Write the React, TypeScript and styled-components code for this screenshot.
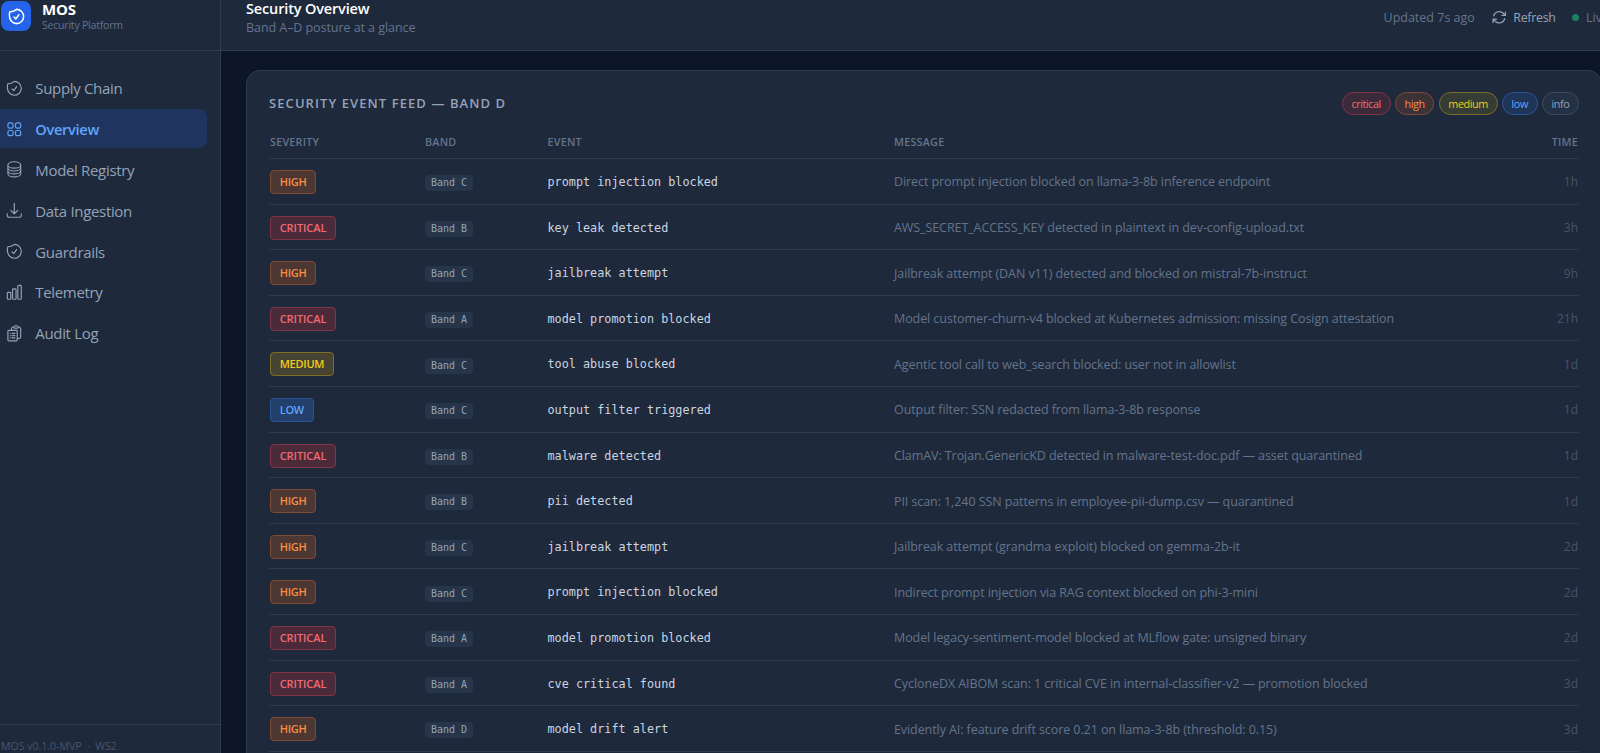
import React from "react";
import styled, { createGlobalStyle } from "styled-components";
import {
  HiOutlineSquares2X2,
  HiOutlineCircleStack,
  HiOutlineArrowDownTray,
  HiOutlineChartBar,
  HiOutlineClipboardDocumentList,
  HiOutlineArrowPath,
} from "react-icons/hi2";

const sans = `"Open Sans", "Noto Sans", sans-serif`;
const mono = `"DejaVu Sans Mono", monospace`;

const c = {
  page: "#0d1628",
  panel: "#1e293b",
  line: "#2e3c50",
  muted: "#64748b",
  soft: "#94a3b8",
  faint: "#475569",
};

type Level = "critical" | "high" | "medium" | "low" | "info";

const tones: Record<Level, { fg: string; bg: string; pill: string; edge: string }> = {
  critical: { fg: "#f06a74", bg: "#4b2b3a", pill: "#3b2a3a", edge: "#7f3644" },
  high: { fg: "#f98d42", bg: "#4c3733", pill: "#3c3137", edge: "#804a34" },
  medium: { fg: "#f2cc1d", bg: "#474332", pill: "#353b35", edge: "#7d7026" },
  low: { fg: "#60a5fa", bg: "#233f6b", pill: "#203658", edge: "#2b5596" },
  info: { fg: "#94a3b8", bg: "#283547", pill: "#243043", edge: "#3f4c60" },
};

const GlobalStyle = createGlobalStyle`
  * { box-sizing: border-box; }
  body { margin: 0; background: ${c.page}; overflow: hidden; }
`;

const Shell = styled.div`
  display: grid;
  grid-template-columns: 221px 1406px;
  height: 753px;
  overflow: hidden;
  background: ${c.page};
  font-family: ${sans};
  color: ${c.soft};
`;

const Sidebar = styled.aside`
  display: flex;
  flex-direction: column;
  height: 753px;
  background: ${c.panel};
  border-right: 1px solid ${c.line};
`;

const Brand = styled.div`
  display: flex;
  gap: 11px;
  flex: none;
  height: 51px;
  padding-left: 1px;
  border-bottom: 1px solid ${c.line};
`;

const Logo = styled.div`
  display: grid;
  place-items: center;
  width: 30px;
  height: 30px;
  margin-top: 1px;
  border-radius: 8px;
  background: #2563eb;
  color: #fff;
  font-size: 19px;

  svg {
    stroke-width: 1.9;
  }
`;

const BrandName = styled.div`
  font-size: 15px;
  line-height: 19px;
  font-weight: 700;
  letter-spacing: -0.15px;
  color: #fff;
`;

const BrandSub = styled.div`
  font-size: 10.5px;
  line-height: 12px;
  letter-spacing: -0.2px;
  color: ${c.muted};
`;

const Nav = styled.nav`
  display: flex;
  flex: 1;
  flex-direction: column;
  gap: 1.9px;
  padding: 17.5px 13px 0 0;
`;

const NavItem = styled.a<{ $active?: boolean }>`
  display: flex;
  align-items: center;
  gap: 12px;
  height: 39px;
  padding-left: 4.7px;
  border-radius: 0 8px 8px 0;
  font-size: ${(p) => (p.$active ? "14.6px" : "15px")};
  font-weight: ${(p) => (p.$active ? 600 : 400)};
  letter-spacing: ${(p) => (p.$active ? "-0.3px" : "-0.33px")};
  color: ${(p) => (p.$active ? "#60a5fa" : c.soft)};
  background: ${(p) => (p.$active ? "#1f355f" : "transparent")};

  svg {
    flex: none;
    font-size: 18.6px;
    stroke-width: 1.5;
  }
`;

const Version = styled.div`
  flex: none;
  height: 29px;
  padding-left: 1px;
  border-top: 1px solid ${c.line};
  font-size: 10.6px;
  line-height: 42px;
  letter-spacing: -0.03px;
  white-space: pre;
  color: ${c.faint};
`;

const Main = styled.main`
  display: flex;
  flex-direction: column;
  min-width: 0;
`;

const TopBar = styled.header`
  display: flex;
  justify-content: space-between;
  flex: none;
  height: 51px;
  padding: 0 18px 0 25px;
  background: ${c.panel};
  border-bottom: 1px solid ${c.line};
`;

const PageTitle = styled.h1`
  margin: 0;
  font-size: 14.5px;
  line-height: 17px;
  font-weight: 600;
  letter-spacing: -0.15px;
  color: #fff;
`;

const PageSub = styled.p`
  margin: 0;
  font-size: 12.5px;
  line-height: 22px;
  letter-spacing: -0.06px;
  color: ${c.muted};
`;

const Status = styled.div`
  display: flex;
  align-items: center;
  height: 34px;
  font-size: 12.5px;
  color: ${c.muted};
`;

const Refresh = styled.button`
  display: flex;
  align-items: center;
  gap: 5.5px;
  margin: 0 16.5px;
  padding: 0;
  border: 0;
  background: none;
  font: 400 12.4px ${sans};
  letter-spacing: -0.3px;
  color: ${c.soft};

  svg {
    font-size: 16.5px;
    stroke-width: 1.8;
  }
`;

const Live = styled.span`
  display: flex;
  align-items: center;
  gap: 7px;

  &::before {
    content: "";
    width: 7px;
    height: 7px;
    border-radius: 50%;
    background: #1f7f62;
  }
`;

const Card = styled.section`
  flex: none;
  margin: 19px 25px 0;
  padding: 20px 22px;
  border: 1px solid ${c.line};
  border-radius: 14px;
  background: ${c.panel};
`;

const CardHead = styled.div`
  display: flex;
  align-items: center;
  justify-content: space-between;
  height: 24px;
`;

const CardTitle = styled.h2`
  margin: 0;
  font-size: 13px;
  font-weight: 600;
  letter-spacing: 1.08px;
  color: ${c.soft};
`;

const Pills = styled.div`
  display: flex;
  gap: 4.3px;
`;

const Pill = styled.span<{ $level: Level }>`
  padding: 0 8.7px;
  border: 1px solid ${(p) => tones[p.$level].edge};
  border-radius: 12px;
  background: ${(p) => tones[p.$level].pill};
  font-size: 10.8px;
  line-height: 21px;
  letter-spacing: -0.42px;
  color: ${(p) => tones[p.$level].fg};
`;

const Row = styled.div`
  display: grid;
  grid-template-columns: 155px 122.5px 346.5px 1fr auto;
  align-items: center;
  height: 45.6px;
  padding: 1.4px 1px 0;
  border-bottom: 1px solid ${c.line};
`;

const HeadRow = styled(Row)`
  height: 44px;
  padding-top: 9px;
  font-size: 10.8px;
  font-weight: 600;
  letter-spacing: 0.22px;
  color: ${c.muted};
`;

const Badge = styled.span<{ $level: Level }>`
  display: inline-block;
  padding: 0 8.7px;
  border: 1px solid ${(p) => tones[p.$level].edge};
  border-radius: 4px;
  background: ${(p) => tones[p.$level].bg};
  font-size: 11px;
  font-weight: 600;
  line-height: 22px;
  letter-spacing: ${(p) => (p.$level === "critical" ? "-0.05px" : "-0.25px")};
  vertical-align: top;
  color: ${(p) => tones[p.$level].fg};
`;

const BandTag = styled.span`
  justify-self: start;
  margin-top: 2.4px;
  padding: 0 6px;
  border-radius: 4px;
  background: #27354a;
  font: 10px/16px ${mono};
  color: ${c.soft};
`;

const EventName = styled.span`
  font: 11.8px ${mono};
  color: #cbd5e1;
`;

const Message = styled.span`
  font-size: 12.5px;
  letter-spacing: -0.08px;
  white-space: nowrap;
  color: ${c.muted};
`;

const Time = styled.span`
  font-size: 12px;
  color: ${c.faint};
`;

/* Round shield whose left shoulder keeps its point. */
function ShieldIcon() {
  return (
    <svg
      width="1em"
      height="1em"
      viewBox="0 0 24 24"
      fill="none"
      stroke="currentColor"
      strokeLinecap="round"
      strokeLinejoin="round"
    >
      <path d="M9 12.75 11.25 15 15 9.75M12 3A12 12 0 0 1 3.7 6.1 12 12 0 0 0 3 10.5C3 16.5 7 21 12 21a9 9 0 1 0 0-18Z" />
    </svg>
  );
}

const navItems = [
  { label: "Supply Chain", Icon: ShieldIcon },
  { label: "Overview", Icon: HiOutlineSquares2X2, active: true },
  { label: "Model Registry", Icon: HiOutlineCircleStack },
  { label: "Data Ingestion", Icon: HiOutlineArrowDownTray },
  { label: "Guardrails", Icon: ShieldIcon },
  { label: "Telemetry", Icon: HiOutlineChartBar },
  { label: "Audit Log", Icon: HiOutlineClipboardDocumentList },
];

const levels: Level[] = ["critical", "high", "medium", "low", "info"];

const events: [Level, string, string, string, string][] = [
  ["high", "C", "prompt injection blocked", "Direct prompt injection blocked on llama-3-8b inference endpoint", "1h"],
  ["critical", "B", "key leak detected", "AWS_SECRET_ACCESS_KEY detected in plaintext in dev-config-upload.txt", "3h"],
  ["high", "C", "jailbreak attempt", "Jailbreak attempt (DAN v11) detected and blocked on mistral-7b-instruct", "9h"],
  ["critical", "A", "model promotion blocked", "Model customer-churn-v4 blocked at Kubernetes admission: missing Cosign attestation", "21h"],
  ["medium", "C", "tool abuse blocked", "Agentic tool call to web_search blocked: user not in allowlist", "1d"],
  ["low", "C", "output filter triggered", "Output filter: SSN redacted from llama-3-8b response", "1d"],
  ["critical", "B", "malware detected", "ClamAV: Trojan.GenericKD detected in malware-test-doc.pdf — asset quarantined", "1d"],
  ["high", "B", "pii detected", "PII scan: 1,240 SSN patterns in employee-pii-dump.csv — quarantined", "1d"],
  ["high", "C", "jailbreak attempt", "Jailbreak attempt (grandma exploit) blocked on gemma-2b-it", "2d"],
  ["high", "C", "prompt injection blocked", "Indirect prompt injection via RAG context blocked on phi-3-mini", "2d"],
  ["critical", "A", "model promotion blocked", "Model legacy-sentiment-model blocked at MLflow gate: unsigned binary", "2d"],
  ["critical", "A", "cve critical found", "CycloneDX AIBOM scan: 1 critical CVE in internal-classifier-v2 — promotion blocked", "3d"],
  ["high", "D", "model drift alert", "Evidently AI: feature drift score 0.21 on llama-3-8b (threshold: 0.15)", "3d"],
];

export default function App() {
  return (
    <Shell>
      <GlobalStyle />
      <Sidebar>
        <Brand>
          <Logo>
            <ShieldIcon />
          </Logo>
          <div>
            <BrandName>MOS</BrandName>
            <BrandSub>Security Platform</BrandSub>
          </div>
        </Brand>
        <Nav>
          {navItems.map(({ label, Icon, active }) => (
            <NavItem key={label} $active={active}>
              <Icon />
              {label}
            </NavItem>
          ))}
        </Nav>
        <Version>{"MOS v0.1.0-MVP  ·  WS2"}</Version>
      </Sidebar>
      <Main>
        <TopBar>
          <div>
            <PageTitle>Security Overview</PageTitle>
            <PageSub>Band A–D posture at a glance</PageSub>
          </div>
          <Status>
            <span>Updated 7s ago</span>
            <Refresh>
              <HiOutlineArrowPath />
              Refresh
            </Refresh>
            <Live>Live</Live>
          </Status>
        </TopBar>
        <Card>
          <CardHead>
            <CardTitle>SECURITY EVENT FEED — BAND D</CardTitle>
            <Pills>
              {levels.map((l) => (
                <Pill key={l} $level={l}>
                  {l}
                </Pill>
              ))}
            </Pills>
          </CardHead>
          <HeadRow>
            <span>SEVERITY</span>
            <span>BAND</span>
            <span>EVENT</span>
            <span>MESSAGE</span>
            <span>TIME</span>
          </HeadRow>
          {events.map(([level, band, name, message, time], i) => (
            <Row key={i}>
              <div>
                <Badge $level={level}>{level.toUpperCase()}</Badge>
              </div>
              <BandTag>Band {band}</BandTag>
              <EventName>{name}</EventName>
              <Message>{message}</Message>
              <Time>{time}</Time>
            </Row>
          ))}
        </Card>
      </Main>
    </Shell>
  );
}
